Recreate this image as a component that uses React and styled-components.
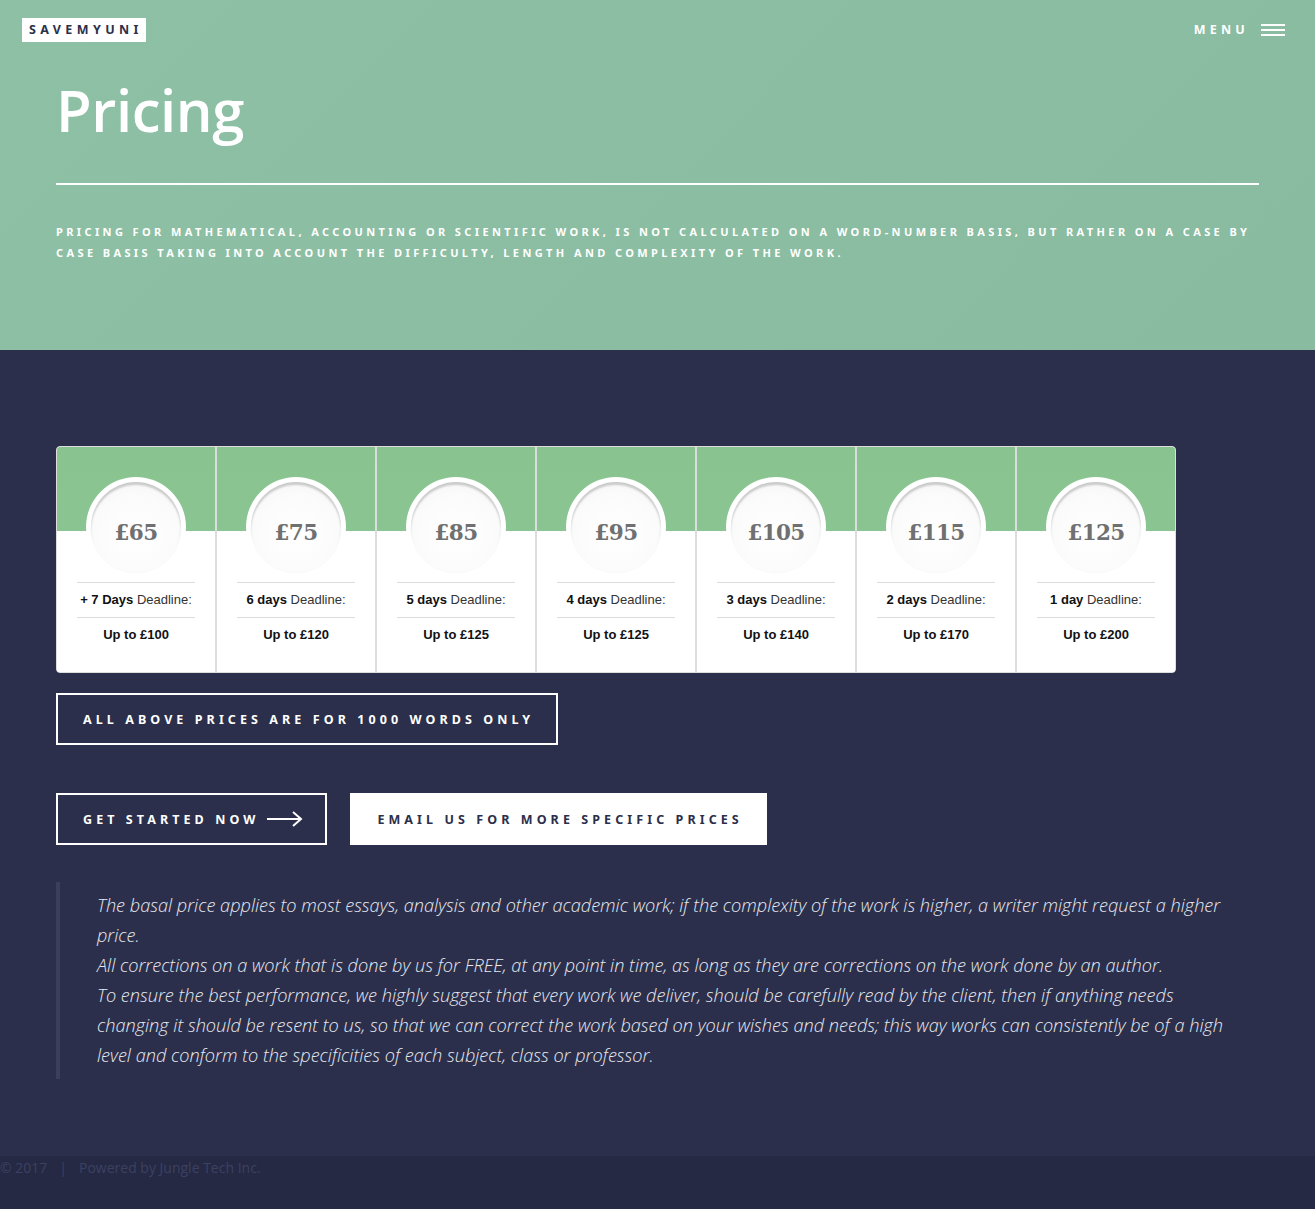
import React from "react";
import styled, { createGlobalStyle } from "styled-components";

const Global = createGlobalStyle`
  html, body { margin: 0; padding: 0; }
  body { background: #2b2f4b; font-family: "Open Sans", sans-serif; }
  * { box-sizing: border-box; }
`;

const Page = styled.div`
  min-height: 100vh;
  display: flex;
  flex-direction: column;
`;

const Hero = styled.header`
  background: linear-gradient(135deg, #8dc0a4 0%, #88bba0 100%);
  height: 350px;
  padding: 18px 30px 0 22px;
`;

const TopBar = styled.div`
  display: flex;
  justify-content: space-between;
  align-items: flex-start;
`;

const Logo = styled.div`
  background: #fff;
  color: #2b2f4b;
  font-family: "Noto Sans", sans-serif;
  font-weight: 700;
  font-size: 12.5px;
  letter-spacing: 4.4px;
  height: 24px;
  line-height: 24px;
  padding: 0 3px 0 7px;
`;

const Menu = styled.div`
  display: flex;
  align-items: center;
  gap: 12px;
  color: #fff;
  font-family: "Noto Sans", sans-serif;
  font-weight: 700;
  font-size: 12.5px;
  letter-spacing: 4.2px;
  margin-top: 3px;
`;

const Burger = styled.span`
  display: flex;
  flex-direction: column;
  gap: 3px;
  width: 24px;
  span { display: block; height: 2px; background: #fff; }
`;

const HeroInner = styled.div`
  padding: 0 34px;
`;

const Title = styled.h1`
  margin: 30px 0 0 0;
  font-family: "Open Sans", sans-serif;
  font-weight: 600;
  font-size: 58px;
  line-height: 76px;
  color: #fff;
  letter-spacing: -0.4px;
`;

const Rule = styled.hr`
  border: 0;
  height: 2px;
  background: #fff;
  margin: 35px 0 0 0;
  width: 1203px;
`;

const Lead = styled.p`
  margin: 36px 0 0 0;
  color: #fff;
  font-family: "Noto Sans", sans-serif;
  font-weight: 700;
  font-size: 11px;
  letter-spacing: 3.39px;
  line-height: 21px;
  text-transform: uppercase;
  max-width: 1215px;
`;

const Main = styled.main`
  padding: 96px 56px 77px 56px;
`;

const Table = styled.div`
  display: flex;
  width: 1120px;
  background: #fff;
  border: 1px solid #ddd;
  border-radius: 4px;
  overflow: hidden;
`;

const Col = styled.div`
  flex: 0 0 ${(p) => (p.$last ? 158 : 160)}px;
  border-right: ${(p) => (p.$last ? "0" : "2px solid #dcdcdc")};
  background: linear-gradient(to bottom, #89c490 0, #89c492 84px, #fff 84px);
  display: flex;
  flex-direction: column;
  align-items: center;
  padding: 30px 20px 0 20px;
  height: 225px;
`;

const Ring = styled.div`
  width: 100px;
  height: 100px;
  border-radius: 50%;
  background: #fff;
  display: flex;
  align-items: center;
  justify-content: center;
`;

const Circle = styled.div`
  width: 90px;
  height: 90px;
  border-radius: 50%;
  background: radial-gradient(circle at 50% 60%, #fff 0%, #fbfbfb 60%, #f1f1f1 100%);
  box-shadow: inset 0 3px 2px rgba(0, 0, 0, 0.18), 0 1px 2px rgba(0,0,0,0.04);
  display: flex;
  align-items: center;
  justify-content: center;
  font-family: "DejaVu Serif", serif;
  font-weight: 700;
  font-size: 21.5px;
  color: #707070;
  padding-top: 10px;
  letter-spacing: -0.7px;
`;

const Line = styled.div`
  width: 100%;
  border-top: 1px solid #ddd;
  padding: 9px 0 0;
  height: ${(p) => p.$h}px;
  text-align: center;
  font-family: "Liberation Sans", Arial, sans-serif;
  font-size: 13px;
  line-height: 16px;
  color: #333;
  b { color: #111; font-weight: 700; }
`;

const Strong = styled.div`
  font-family: "Liberation Sans", Arial, sans-serif;
  font-weight: 700;
  font-size: 13px;
  color: #111;
  text-align: center;
`;

const Spacer = styled.div`
  height: ${(p) => p.$h}px;
`;

const Button = styled.a`
  display: inline-flex;
  align-items: center;
  gap: 8px;
  height: 52px;
  padding: 0 22px 0 25px;
  border: 2px solid #fff;
  background: ${(p) => (p.$solid ? "#fff" : "transparent")};
  color: ${(p) => (p.$solid ? "#2b2f4b" : "#fff")};
  font-family: "Noto Sans", sans-serif;
  font-weight: 700;
  font-size: 12.5px;
  letter-spacing: 4.08px;
  text-transform: uppercase;
  text-decoration: none;
  white-space: nowrap;
`;

const Row = styled.div`
  display: flex;
  gap: 23px;
  margin-top: ${(p) => p.$mt}px;
`;

const Quote = styled.blockquote`
  margin: 37px 0 0 0;
  border-left: 4px solid #3b3f5c;
  padding: 8px 17px 9px 37px;
  font-family: "Open Sans", sans-serif;
  font-style: italic;
  font-weight: 300;
  font-size: 18.15px;
  line-height: 30px;
  color: #e8e9f0;
  p { margin: 0; }
`;

const Footer = styled.footer`
  flex: 1;
  background: #252943;
  min-height: 54px;
  padding-top: 2px;
  font-family: "Open Sans", sans-serif;
  font-weight: 400;
  font-size: 14px;
  color: #3c4162;
  line-height: 20px;
  span { margin: 0 12px 0 12px; }
`;

const plans = [
  ["£65", "+ 7 Days", "£100"],
  ["£75", "6 days", "£120"],
  ["£85", "5 days", "£125"],
  ["£95", "4 days", "£125"],
  ["£105", "3 days", "£140"],
  ["£115", "2 days", "£170"],
  ["£125", "1 day", "£200"],
];

const Arrow = () => (
  <svg width="36" height="16" viewBox="0 0 36 16" fill="none" stroke="#fff" strokeWidth="2">
    <path d="M0 8 H34" />
    <path d="M26 1 L34 8 L26 15" />
  </svg>
);

export default function App() {
  return (
    <Page>
      <Global />
      <Hero>
        <TopBar>
          <Logo>SAVEMYUNI</Logo>
          <Menu>
            MENU
            <Burger>
              <span />
              <span />
              <span />
            </Burger>
          </Menu>
        </TopBar>
        <HeroInner>
          <Title>Pricing</Title>
          <Rule />
          <Lead>
            Pricing for mathematical, accounting or scientific work, is not calculated on a word-number basis,
            but rather on a case by case basis taking into account the difficulty, length and complexity of the work.
          </Lead>
        </HeroInner>
      </Hero>
      <Main>
        <Table>
          {plans.map(([price, days, up], i) => (
            <Col key={price} $last={i === plans.length - 1}>
              <Ring>
                <Circle>{price}</Circle>
              </Ring>
              <Spacer $h={5} />
              <Line $h={35}>
                <b>{days}</b> Deadline:
              </Line>
              <Line $h={35}>
                <Strong>Up to {up}</Strong>
              </Line>
            </Col>
          ))}
        </Table>
        <Row $mt={20}>
          <Button>All above prices are for 1000 words only</Button>
        </Row>
        <Row $mt={48}>
          <Button>
            Get started now <Arrow />
          </Button>
          <Button $solid>Email us for more specific prices</Button>
        </Row>
        <Quote>
          <p>
            The basal price applies to most essays, analysis and other academic work; if the complexity of the work is
            higher, a writer might request a higher price.
          </p>
          <p>
            All corrections on a work that is done by us for FREE, at any point in time, as long as they are corrections
            on the work done by an author.
          </p>
          <p>
            To ensure the best performance, we highly suggest that every work we deliver, should be carefully read by the
            client, then if anything needs changing it should be resent to us, so that we can correct the work based on
            your wishes and needs; this way works can consistently be of a high level and conform to the specificities of
            each subject, class or professor.
          </p>
        </Quote>
      </Main>
      <Footer>
        © 2017<span>|</span>Powered by Jungle Tech Inc.
      </Footer>
    </Page>
  );
}
